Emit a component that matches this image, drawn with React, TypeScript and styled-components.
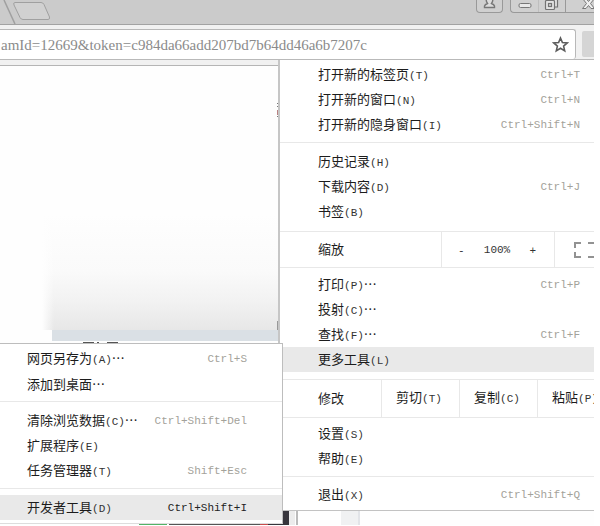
import React from "react";
import styled, { createGlobalStyle } from "styled-components";

const GlobalStyle = createGlobalStyle`
  * { box-sizing: border-box; }
  body { margin: 0; background: #fff; overflow: hidden; }
  button, input { margin: 0; padding: 0; border: 0; background: none; font: inherit; color: inherit; }
`;

const Browser = styled.div`
  position: relative;
  display: flex;
  flex-direction: column;
  margin-right: 6px;
  min-height: 525px;
  overflow: hidden;
  font: 13px/20px "Noto Sans CJK SC", sans-serif;
  color: #1c1c1c;
`;

const TitleBar = styled.header`
  display: flex;
  justify-content: space-between;
  height: 25px;
  background: #cbcbcb;
  border-bottom: 1px solid #a2a2a2;
`;

const NewTab = styled.button`
  width: 54px;
  height: 24px;
  svg { display: block; }
`;

const WindowControls = styled.div`
  display: flex;
  gap: 7px;
  height: 13px;
`;

const ControlGroup = styled.div<{ $open?: boolean }>`
  display: flex;
  border: 1px solid #999;
  border-top: 0;
  border-right-width: ${(p) => (p.$open ? 0 : 1)}px;
  border-radius: ${(p) => (p.$open ? "0 0 0 4px" : "0 0 4px 4px")};
  background: #d0d0d0;
`;

const ControlButton = styled.button<{ $width: number; $divider?: string }>`
  width: ${(p) => p.$width}px;
  height: 12px;
  overflow: hidden;
  border-left: ${(p) => (p.$divider ? `1px solid ${p.$divider}` : "0")};
  svg { display: block; margin: 0 auto; }
`;

const Toolbar = styled.div`
  display: flex;
  gap: 6px;
  height: 35px;
  padding-top: 4px;
  background: #f1f1f1;
  border-bottom: 1px solid #b9b9b9;
`;

const AddressBox = styled.div`
  display: flex;
  flex: 1;
  align-items: center;
  padding-right: 6px;
  background: #fff;
  border: 1px solid #b8b8b8;
  border-left: 0;
  border-bottom: 0;
  border-radius: 0 3px 3px 0;
`;

const Address = styled.input`
  flex: 1;
  min-width: 0;
  padding-left: 1px;
  outline: none;
  font: 15px/20px "Liberation Serif", serif;
  color: #8b8b8b;
`;

const StarButton = styled.button`
  width: 17px;
  height: 17px;
  svg { display: block; }
`;

const MenuToggle = styled.button`
  width: 12px;
  height: 26px;
  margin-top: 2px;
  border-radius: 2px 0 0 2px;
  background: #d5d5d5;
`;

const BookmarkStrip = styled.div`
  height: 6px;
  background: #f1f1f1;
  border-bottom: 1px solid #b5b5b5;
`;

const Page = styled.main`
  display: flex;
  flex: 1;
  flex-direction: column;
  background: #fefefe;
`;

const Fade = styled.div`
  width: 236px;
  height: 116px;
  margin: 148px 0 0 42px;
  background: linear-gradient(90deg, #fefefe, #fefefe00 12px),
    linear-gradient(#fefefe, #fafafa 50%, #f2f2f2 75%, #e7e7e7);
`;

const Band = styled.div`
  width: 226px;
  height: 11px;
  margin-left: 52px;
  background: #dae0e5;
`;

const PageHeading = styled.div`
  height: 3px;
  margin-left: 82px;
  overflow: hidden;
  svg { display: block; }
`;

const PageFoot = styled.div`
  margin-top: auto;
  height: 15px;
  svg { display: block; }
`;

const EdgeDetail = styled.svg`
  position: absolute;
  left: 277px;
  top: 102px;
`;

const Menu = styled.nav`
  position: absolute;
  top: 60px;
  right: 0;
  width: 316px;
  overflow: hidden;
  background: #fff;
  border-left: 2px solid #c6c6c6;
  border-bottom: 1px solid #c2c2c2;
`;

const SubMenu = styled.nav`
  position: absolute;
  top: 343px;
  left: 0;
  width: 283px;
  background: #fff;
  border: solid #bdbdbd;
  border-width: 1px 1px 0 0;
  border-bottom: 1px solid #ddd;
`;

const Group = styled.div<{ $top: number; $bottom: number }>`
  padding: ${(p) => p.$top}px 0 ${(p) => p.$bottom}px;
  & + & { border-top: 1px solid #e8e8e8; }
`;

const Item = styled.button<{ $active?: boolean; $nested?: boolean }>`
  display: flex;
  align-items: center;
  justify-content: space-between;
  width: 100%;
  height: 25px;
  padding: ${(p) => (p.$nested ? "0 35px 0 27px" : "0 14px 0 38px")};
  background: ${(p) => (p.$active ? "#e9e9e9" : "transparent")};
  white-space: nowrap;
`;

const Mono = styled.span`
  font-family: "Liberation Mono", monospace;
  font-size: 11px;
  color: #333;
`;

const Shortcut = styled(Mono)<{ $dark?: boolean }>`
  color: ${(p) => (p.$dark ? "#222" : "#a3a29a")};
`;

const SplitRow = styled.div<{ $height: number }>`
  display: flex;
  height: ${(p) => p.$height}px;
  border-top: 1px solid #e8e8e8;
  border-bottom: 1px solid #e8e8e8;
  & + div { border-top: 0; }
`;

const SplitLabel = styled.span<{ $width: number }>`
  display: flex;
  flex: none;
  align-items: center;
  width: ${(p) => p.$width}px;
  padding: 0 0 2px 38px;
`;

const EditButton = styled.button`
  flex: none;
  width: 78px;
  padding: 0 0 2px 14px;
  border-left: 1px solid #e8e8e8;
  text-align: left;
  white-space: nowrap;
`;

const ZoomControls = styled.div`
  display: flex;
  flex: none;
  align-items: center;
  justify-content: space-between;
  width: 113px;
  padding: 0 18px 0 16px;
  border-left: 1px solid #e8e8e8;
`;

const FullScreen = styled.button`
  flex: none;
  width: 50px;
  padding-left: 19px;
  border-left: 1px solid #e8e8e8;
  svg { display: block; }
`;

type Entry = { text: string; letter?: string; dots?: boolean; keys?: string; active?: boolean };

const openItems: Entry[] = [
  { text: "打开新的标签页", letter: "T", keys: "Ctrl+T" },
  { text: "打开新的窗口", letter: "N", keys: "Ctrl+N" },
  { text: "打开新的隐身窗口", letter: "I", keys: "Ctrl+Shift+N" },
];
const libraryItems: Entry[] = [
  { text: "历史记录", letter: "H" },
  { text: "下载内容", letter: "D", keys: "Ctrl+J" },
  { text: "书签", letter: "B" },
];
const pageItems: Entry[] = [
  { text: "打印", letter: "P", dots: true, keys: "Ctrl+P" },
  { text: "投射", letter: "C", dots: true },
  { text: "查找", letter: "F", dots: true, keys: "Ctrl+F" },
  { text: "更多工具", letter: "L", active: true },
];
const settingItems: Entry[] = [
  { text: "设置", letter: "S" },
  { text: "帮助", letter: "E" },
];
const exitItems: Entry[] = [{ text: "退出", letter: "X", keys: "Ctrl+Shift+Q" }];
const saveItems: Entry[] = [
  { text: "网页另存为", letter: "A", dots: true, keys: "Ctrl+S" },
  { text: "添加到桌面", dots: true },
];
const toolItems: Entry[] = [
  { text: "清除浏览数据", letter: "C", dots: true, keys: "Ctrl+Shift+Del" },
  { text: "扩展程序", letter: "E" },
  { text: "任务管理器", letter: "T", keys: "Shift+Esc" },
];
const developerItems: Entry[] = [
  { text: "开发者工具", letter: "D", keys: "Ctrl+Shift+I", active: true },
];

function Label({ text, letter, dots }: Entry) {
  return (
    <span>
      {text}
      {letter && <Mono>({letter})</Mono>}
      {dots && "…"}
    </span>
  );
}

function Items({ entries, nested }: { entries: Entry[]; nested?: boolean }) {
  return (
    <>
      {entries.map((entry) => (
        <Item key={entry.text} $active={entry.active} $nested={nested}>
          <Label {...entry} />
          {entry.keys && <Shortcut $dark={entry.active}>{entry.keys}</Shortcut>}
        </Item>
      ))}
    </>
  );
}

export default function App() {
  return (
    <>
      <GlobalStyle />
      <Browser>
        <TitleBar>
          <NewTab aria-label="新标签页">
            <svg width="54" height="24" fill="none" stroke="#a0a0a0">
              <path d="M4 0L15 24" strokeWidth="1.5" />
              <path d="M15 2.5H41Q43 2.5 44 4.5L49.5 17Q50 19.5 48 19.5H23Q21 19.5 20 17.5L14 5Q13 2.5 15 2.5Z" fill="#d1d1d1" />
            </svg>
          </NewTab>
          <WindowControls>
            <ControlGroup>
              <ControlButton $width={25} aria-label="用户">
                <svg width="13" height="12" fill="#ddd" stroke="#777" strokeWidth="1.4">
                  <path d="M1.5 7.5V6Q2 4.500 4.500 3.500Q3 1.500 3.200-1H9.800Q10 1.500 8.500 3.500Q11 4.500 11.500 6V7.500Z" />
                </svg>
              </ControlButton>
            </ControlGroup>
            <ControlGroup $open>
              <ControlButton $width={27} aria-label="最小化">
                <svg width="14" height="12"><rect x="1" y="3.5" width="12" height="4" rx="1.5" fill="#e8e8e8" stroke="#777" /></svg>
              </ControlButton>
              <ControlButton $width={27} $divider="#bebebe" aria-label="还原">
                <svg width="16" height="12" fill="#e3e3e3" stroke="#737373" strokeWidth="1.2">
                  <path d="M5-2H13.5V7H10" />
                  <rect x="1.5" y="0.5" width="9" height="9" rx="1" />
                  <rect x="4.5" y="3.5" width="3" height="3" fill="#d0d0d0" />
                </svg>
              </ControlButton>
              <ControlButton $width={29} $divider="#999" aria-label="关闭">
                <svg width="29" height="12" fill="#eee" stroke="#777">
                  <path d="M16.5-1.5H20L22.500 1.500L25-1.500H28.500L24.500 3.500L28.500 8.500H25L22.500 5.500L20 8.500H16.500L20.500 3.500Z" />
                </svg>
              </ControlButton>
            </ControlGroup>
          </WindowControls>
        </TitleBar>
        <Toolbar>
          <AddressBox>
            <Address
              aria-label="地址"
              spellCheck={false}
              defaultValue="amId=12669&token=c984da66add207bd7b64dd46a6b7207c"
            />
            <StarButton aria-label="添加书签">
              <svg width="17" height="17" fill="none" stroke="#5c5c5c" strokeWidth="1.6">
                <path d="M8.5 2L10.4 6.5L15.3 6.9L11.6 10.1L12.7 14.9L8.5 12.3L4.3 14.9L5.4 10.1L1.7 6.9L6.6 6.5Z" />
              </svg>
            </StarButton>
          </AddressBox>
          <MenuToggle aria-label="菜单" />
        </Toolbar>
        <BookmarkStrip />
        <Page>
          <Fade />
          <Band />
          <PageHeading>
            <svg width="38" height="3" fill="none" stroke="#555">
              <path d="M1 1.5H12M15 1.5H17M25 1.5H36M2 2.5H4M6 2.5H8M15 2.5H18M26 2.5H35" />
            </svg>
          </PageHeading>
          <PageFoot>
            <svg width="370" height="15">
              <rect x="139" y="14" width="28" height="1" fill="#52b266" />
              <rect x="169" y="14" width="91" height="1" fill="#555" />
              <rect x="260" y="14" width="8" height="1" fill="#c94c4c" />
              <rect x="268" y="0" width="21" height="15" fill="#37353c" />
              <rect x="289" y="0" width="6" height="15" fill="#ececec" />
              <rect x="296" y="0" width="2" height="15" fill="#bbb" />
              <rect x="341" y="0" width="17" height="15" fill="#f0f1f2" />
              <rect x="358" y="0" width="2" height="15" fill="#e2e4e8" />
            </svg>
          </PageFoot>
        </Page>
        <EdgeDetail width="2" height="230">
          <path d="M0 1.5H2M0 4.5H2M0 14.5H2" stroke="#777" />
          <rect y="8" width="2" height="5" fill="#b98282" />
          <rect y="219" width="2" height="9" fill="#999" />
        </EdgeDetail>
        <Menu aria-label="主菜单">
          <Group $top={2} $bottom={5}><Items entries={openItems} /></Group>
          <Group $top={6} $bottom={7}><Items entries={libraryItems} /></Group>
          <SplitRow $height={37}>
            <SplitLabel $width={161}>缩放</SplitLabel>
            <ZoomControls>
              <button aria-label="缩小"><Mono>-</Mono></button>
              <Mono>100%</Mono>
              <button aria-label="放大"><Mono>+</Mono></button>
            </ZoomControls>
            <FullScreen aria-label="全屏">
              <svg width="24" height="16" fill="none" stroke="#929292" strokeWidth="2">
                <path d="M1 6V1H7M14 1H22V6M1 10V15H7M14 15H22V10" />
              </svg>
            </FullScreen>
          </SplitRow>
          <Group $top={4} $bottom={7}><Items entries={pageItems} /></Group>
          <SplitRow $height={39}>
            <SplitLabel $width={101}>修改</SplitLabel>
            <EditButton><Label text="剪切" letter="T" /></EditButton>
            <EditButton><Label text="复制" letter="C" /></EditButton>
            <EditButton><Label text="粘贴" letter="P" /></EditButton>
          </SplitRow>
          <Group $top={3} $bottom={5}><Items entries={settingItems} /></Group>
          <Group $top={5} $bottom={3}><Items entries={exitItems} /></Group>
        </Menu>
        <SubMenu aria-label="更多工具">
          <Group $top={2} $bottom={5}><Items entries={saveItems} nested /></Group>
          <Group $top={6} $bottom={5}><Items entries={toolItems} nested /></Group>
          <Group $top={6} $bottom={3}><Items entries={developerItems} nested /></Group>
        </SubMenu>
      </Browser>
    </>
  );
}
